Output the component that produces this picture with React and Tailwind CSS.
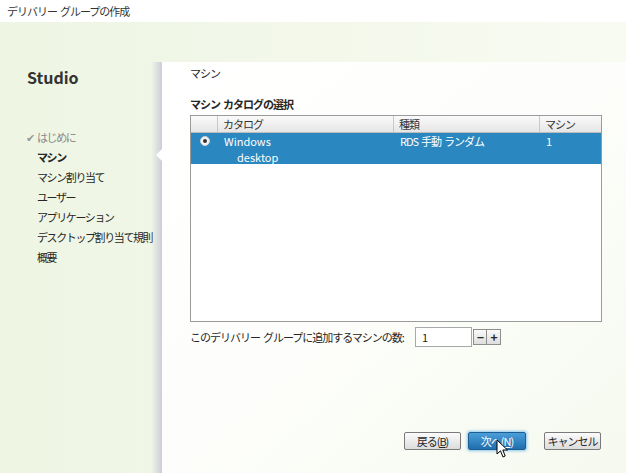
import React from "react";

const font = {
  fontFamily: '"Noto Sans CJK JP", "Noto Sans", sans-serif',
};

const steps = [
  { label: "はじめに", done: true },
  { label: "マシン", active: true },
  { label: "マシン割り当て" },
  { label: "ユーザー" },
  { label: "アプリケーション" },
  { label: "デスクトップ割り当て規則" },
  { label: "概要" },
];

function Cursor() {
  return (
    <svg width="13" height="20" viewBox="0 0 13 20" className="absolute left-[27px] top-[6px]">
      <path
        d="M1 1 L1 15 L4.5 11.8 L7 18 L9.2 17 L6.8 11 L11.5 11 Z"
        fill="#fff"
        stroke="#000"
        strokeWidth="1"
        strokeLinejoin="round"
      />
    </svg>
  );
}

export default function App() {
  return (
    <div
      className="w-[626px] h-[473px] flex flex-col overflow-hidden text-[11px] leading-[14px] tracking-[-1px] whitespace-nowrap text-[#262626]"
      style={font}
    >
      {/* title bar */}
      <div className="h-[22px] bg-white flex items-center pl-[7px] text-[#333]">
        デリバリー&nbsp; グループの作成
      </div>

      <div className="flex-1 flex bg-gradient-to-r from-[#eef5e3] to-[#f8fbf2]">
        {/* sidebar */}
        <div className="w-[162px] shrink-0 pl-[27px] pt-[45px] tracking-[-1.4px]">
          <div className="text-[16px] font-bold leading-[20px] tracking-normal text-[#333]">Studio</div>
          <div className="mt-[40px] flex flex-col">
            {steps.map((s) => (
              <div
                key={s.label}
                className={`h-[20px] flex items-center ${
                  s.done ? "text-[#8a8a8a]" : "text-[#262626]"
                } ${s.active ? "font-bold" : ""}`}
              >
                {s.done ? (
                  <span className="text-[#999] text-[11px] w-[11px] -ml-[1px]">✔</span>
                ) : (
                  <span className="w-[10px]" />
                )}
                {s.label}
              </div>
            ))}
          </div>
        </div>

        {/* main panel */}
        <div className="flex-1 mt-[40px] relative bg-gradient-to-br from-[#ffffff] via-[#fdfefb] to-[#f5f9ee]">
          <div className="absolute -left-[11px] top-0 bottom-0 w-[11px] bg-gradient-to-r from-transparent to-[#cbcdd9]" />
          <div className="absolute -left-[6px] top-[87px] w-0 h-0 border-y-[6px] border-y-transparent border-r-[6px] border-r-white" />

          <div className="pl-[28px] pr-[24px] pt-[4px]">
            <div className="h-[14px]">マシン</div>
            <div className="mt-[17px] h-[14px] font-bold">マシン&nbsp; カタログの選択</div>

            {/* table */}
            <div className="mt-[4px] w-[412px] h-[207px] border border-[#9b9b9b] bg-white flex flex-col">
              <div className="h-[17px] flex bg-gradient-to-b from-[#fafafa] to-[#e6e6e6] border-b border-[#bdbdbd] text-[#333]">
                <div className="w-[27px] border-r border-[#c8c8c8]" />
                <div className="w-[176px] border-r border-[#c8c8c8] pl-[5px] leading-[16px]">カタログ</div>
                <div className="w-[146px] border-r border-[#c8c8c8] pl-[5px] leading-[16px]">種類</div>
                <div className="flex-1 pl-[5px] leading-[16px]">マシン</div>
              </div>
              <div className="h-[31px] flex bg-[#2a87bf] text-white">
                <div className="w-[27px] flex justify-center pt-[3px]">
                  <span className="w-[10px] h-[10px] rounded-full bg-[#f4f4f4] border border-[#d0d0d0] flex items-center justify-center">
                    <span className="w-[4px] h-[4px] rounded-full bg-[#333]" />
                  </span>
                </div>
                <div className="w-[176px] pl-[6px] leading-[16px] tracking-normal">
                  <div>Windows</div>
                  <div className="pl-[13px]">desktop</div>
                </div>
                <div className="w-[146px] pl-[6px] leading-[16px]">RDS&nbsp; 手動&nbsp; ランダム</div>
                <div className="flex-1 pl-[6px] leading-[16px]">1</div>
              </div>
            </div>

            <div className="mt-[5px] flex items-center h-[20px]">
              <div className="w-[225px]">このデリバリー&nbsp; グループに追加するマシンの数:</div>
              <div className="w-[57px] h-[20px] border border-[#a8a8a8] bg-white pl-[6px] leading-[18px]">1</div>
              <div className="ml-[1px] w-[14px] h-[16px] border border-[#8e8e8e] bg-gradient-to-b from-[#fafafa] to-[#dedede] flex items-center justify-center font-bold text-[12px] leading-none">
                −
              </div>
              <div className="w-[14px] h-[16px] border border-l-0 border-[#8e8e8e] bg-gradient-to-b from-[#fafafa] to-[#dedede] flex items-center justify-center font-bold text-[12px] leading-none">
                +
              </div>
            </div>
          </div>

          {/* buttons */}
          <div className="absolute left-[242px] top-[370px] flex items-center">
            <div className="w-[57px] h-[18px] border border-[#7a7a7a] rounded-[2px] bg-gradient-to-b from-[#fbfbfb] to-[#dcdcdc] flex items-center justify-center">
              戻る(<span className="underline">B</span>)
            </div>
            <div className="relative ml-[7px] w-[58px] h-[18px] border border-[#1c5e93] rounded-[2px] bg-gradient-to-b from-[#4a9ed8] to-[#1f6faf] text-white flex items-center justify-center shadow-[0_0_3px_1px_#8cc4ea]">
              次へ(<span className="underline">N</span>)
              <Cursor />
            </div>
            <div className="ml-[18px] w-[57px] h-[18px] border border-[#7a7a7a] rounded-[2px] bg-gradient-to-b from-[#fbfbfb] to-[#dcdcdc] flex items-center justify-center">
              キャンセル
            </div>
          </div>
        </div>
      </div>
    </div>
  );
}
